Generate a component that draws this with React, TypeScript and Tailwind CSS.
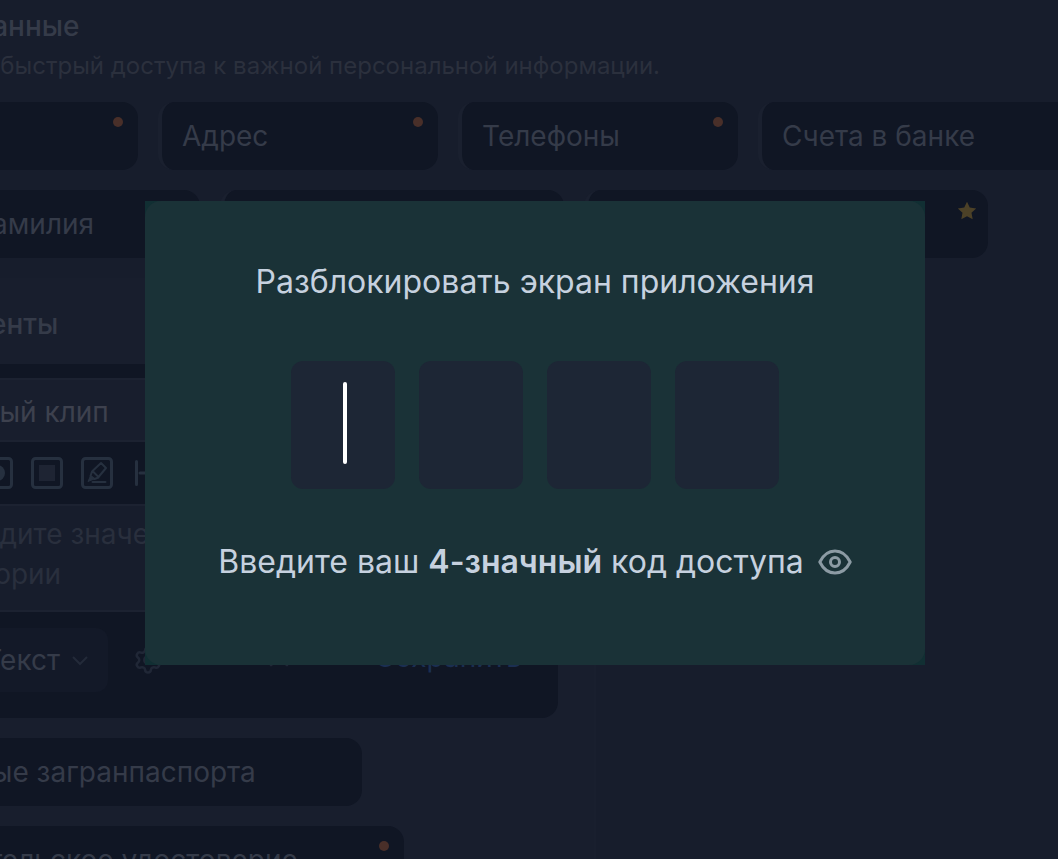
import type { ReactNode } from "react";
import { Settings, X } from "lucide-react";

interface ChipProps {
  label: string;
  className: string;
  mark?: "dot" | "star";
  edge?: boolean;
}

function Star() {
  return (
    <svg viewBox="0 0 24 24" className="absolute top-[10px] right-[10px] h-[22px] w-[22px] fill-[#4c4127]">
      <path d="M12 2l3 6.300 7 .9-5.100 4.800 1.300 7-6.200-3.400L5.800 21l1.300-7L2 9.200l7-.9z" />
    </svg>
  );
}

function Chip({ label, className, mark, edge }: ChipProps) {
  return (
    <button
      type="button"
      className={`relative h-[68px] shrink-0 rounded-2xl bg-[#101624] text-left text-[28px] leading-10 whitespace-nowrap ${
        edge ? "border-l-4 border-[#1a202f] pl-5" : ""
      } ${className}`}
    >
      {label}
      {mark === "dot" && (
        <span className="absolute top-[15px] right-[15px] h-[10px] w-[10px] rounded-full bg-[#492f29]" />
      )}
      {mark === "star" && <Star />}
    </button>
  );
}

function ToolButton({ label, children }: { label: string; children: ReactNode }) {
  return (
    <button type="button" aria-label={label} className="h-8 w-8 shrink-0">
      <svg
        viewBox="0 0 32 32"
        className="h-8 w-8 fill-none stroke-[#26303f] stroke-3"
        strokeLinecap="round"
        strokeLinejoin="round"
      >
        {children}
      </svg>
    </button>
  );
}

function ClipEditor() {
  return (
    <form className="w-[698px] rounded-2xl bg-[#101624] pt-[14px] pb-[26px]">
      <input
        type="text"
        aria-label="Название"
        defaultValue="Новый клип"
        className="block h-16 w-full border-y-2 border-[#1c2231] bg-[#181e2d] pt-1 pl-[86px] text-[28px] text-[#3d414e] outline-none"
      />
      <div className="flex h-[62px] items-center gap-[18px] pl-[121px]">
        <ToolButton label="Круг">
          <rect x="1.5" y="1.5" width="29" height="29" rx="3" />
          <circle cx="16" cy="16" r="8" className="fill-[#26303f] stroke-none" />
        </ToolButton>
        <ToolButton label="Квадрат">
          <rect x="1.5" y="1.5" width="29" height="29" rx="3" />
          <path d="M8 8h16v16H8z" className="fill-[#1e2433] stroke-none" />
        </ToolButton>
        <ToolButton label="Маркер">
          <rect x="1.5" y="1.5" width="29" height="29" rx="3" />
          <path d="M20 6l5 5-7.500 9-6-6zM11 14.500l-1.500 4.500 4 3 4-1.500M11.500 25h13" className="stroke-2" />
          <path d="M9.500 19L7 24.500l6-2.500z" className="fill-[#26303f] stroke-1" />
        </ToolButton>
        <ToolButton label="Разделитель">
          <path d="M5.500 4.500v23M9 16h23" />
        </ToolButton>
      </div>
      <textarea
        rows={2}
        aria-label="Значение"
        placeholder={"Введите значение\nистории"}
        className="block h-[108px] w-full resize-none border-y-2 border-[#1c2231] bg-[#171d2c] pt-2 pl-[89px] text-[28px] leading-10 outline-none placeholder:text-[#292f3d]"
      />
      <div className="flex items-center pt-4">
        <button
          type="button"
          className="ml-[82px] flex h-16 w-[166px] items-center justify-end gap-3 rounded-xl bg-[#131928] pr-5 text-[28px]"
        >
          Текст
          <svg viewBox="0 0 16 16" className="h-4 w-4 fill-none stroke-[#232a39] stroke-2">
            <path d="M1 5l7 7 7-7" />
          </svg>
        </button>
        <button type="button" aria-label="Настройки" className="ml-[25px]">
          <Settings size={30} color="#202736" />
        </button>
        <div className="ml-auto flex items-center gap-20 pr-9 pb-[6px]">
          <button type="button" aria-label="Отмена">
            <X size={32} color="#202736" />
          </button>
          <button type="submit" className="text-[28px] leading-10 text-[#1b2f52]">
            Сохранить
          </button>
        </div>
      </div>
    </form>
  );
}

function Eye() {
  return (
    <svg
      viewBox="0 0 34 26"
      className="h-[26px] w-[34px] fill-none stroke-[#8c9ba4] stroke-3"
      strokeLinejoin="round"
    >
      <path d="M1.800 13C5.500 5.500 11 2 17 2s11.500 3.500 15.200 11C28.500 20.500 23 24 17 24S5.500 20.500 1.800 13z" />
      <circle cx="17" cy="13" r="4.500" />
    </svg>
  );
}

function UnlockDialog() {
  return (
    <div className="bg-[#112f33]">
      <section
        role="dialog"
        aria-labelledby="unlock-title"
        className="flex w-[780px] flex-col items-center rounded-2xl bg-[#1a3237] pt-[61px] pb-[83px] text-[32px] leading-10 text-[#c6d1df]"
      >
        <h2 id="unlock-title">Разблокировать экран приложения</h2>
        <div className="mt-[59px] flex gap-6">
          {[1, 2, 3, 4].map((digit) => (
            <label key={digit} className="relative block">
              <input
                type="password"
                inputMode="numeric"
                maxLength={1}
                aria-label={`Цифра ${digit}`}
                className="block h-32 w-[104px] rounded-xl bg-[#1d2635] text-center caret-transparent outline-none"
              />
              {digit === 1 && (
                <span className="absolute top-[21px] left-[52px] h-[82px] w-1 rounded-full bg-white" />
              )}
            </label>
          ))}
        </div>
        <div className="mt-[53px] flex items-center gap-[14px]">
          <p>
            Введите ваш <b className="font-semibold">4-значный</b> код доступа
          </p>
          <button type="button" aria-label="Показать код">
            <Eye />
          </button>
        </div>
      </section>
    </div>
  );
}

export default function App() {
  return (
    <div className="relative h-screen overflow-hidden bg-[#171d2c] font-['Inter',sans-serif] text-[#353b49]">
      <main className="-ml-[140px]">
        <header className="pt-[6px] whitespace-nowrap">
          <h1 className="-ml-[2px] text-[28px] leading-10 font-medium">Личные данные</h1>
          <p className="flex w-[800px] justify-end text-2xl leading-10 text-[#2b303d]">
            Данные для быстрый доступа к важной персональной информации.
          </p>
        </header>
        <div className="mt-4 flex gap-5">
          <Chip label="Паспорт" mark="dot" className="w-[278px] pl-6" />
          <Chip label="Адрес" mark="dot" edge className="w-[280px]" />
          <Chip label="Телефоны" mark="dot" edge className="w-[280px]" />
          <Chip label="Счета в банке" edge className="w-[340px]" />
        </div>
        <div className="mt-5 flex gap-5">
          <Chip label="Имя и фамилия" className="w-[340px] pl-[22px]" />
          <Chip label="" edge className="w-[344px]" />
          <Chip label="" mark="star" edge className="w-[404px]" />
        </div>
        <section className="mt-5 w-[736px] border-r-2 border-[#191f2e] bg-[#181e2d] pt-[26px] pb-10">
          <h2 className="pl-9 text-[28px] leading-10 font-medium">Документы</h2>
          <div className="mt-5">
            <ClipEditor />
          </div>
          <div className="mt-5 flex flex-col items-start gap-5">
            <Chip label="Данные загранпаспорта" className="w-[502px] pl-[60px]" />
            <Chip label="Водительское удостоверие" mark="dot" className="w-[544px] pl-[60px]" />
          </div>
        </section>
      </main>
      <div className="absolute inset-x-0 top-[201px] flex justify-center pl-3">
        <UnlockDialog />
      </div>
    </div>
  );
}
